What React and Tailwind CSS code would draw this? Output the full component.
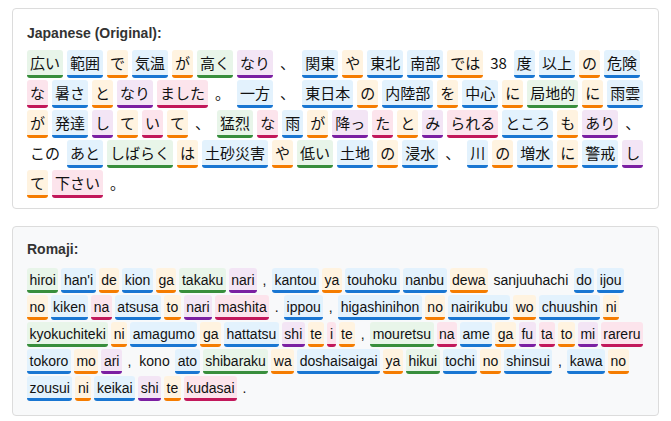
const C = {
  g: "bg-[#e8f5e9] border-[#388e3c]",
  b: "bg-[#e3f2fd] border-[#1976d2]",
  o: "bg-[#fff3e0] border-[#f57c00]",
  p: "bg-[#f3e5f5] border-[#7b1fa2]",
  k: "bg-[#fce4ec] border-[#c2185b]",
  x: "border-transparent",
};
const codes = "g b o b o g p x b o b b o x b b o b k b o p k x b x b o b o b o g o b o b p o k o x g k b o p k o p k b o p x x b g o b o g b o b x b o b o b p o k x".split(" ");
const jp = "広い 範囲 で 気温 が 高く なり 、 関東 や 東北 南部 では 38 度 以上 の 危険 な 暑さ と なり ました 。 一方 、 東日本 の 内陸部 を 中心 に 局地的 に 雨雲 が 発達 し て い て 、 猛烈 な 雨 が 降っ た と み られる ところ も あり 、 この あと しばらく は 土砂災害 や 低い 土地 の 浸水 、 川 の 増水 に 警戒 し て 下さい 。".split(" ");
const ro = "hiroi han'i de kion ga takaku nari , kantou ya touhoku nanbu dewa sanjuuhachi do ijou no kiken na atsusa to nari mashita . ippou , higashinihon no nairikubu wo chuushin ni kyokuchiteki ni amagumo ga hattatsu shi te i te , mouretsu na ame ga fu ta to mi rareru tokoro mo ari , kono ato shibaraku wa doshaisaigai ya hikui tochi no shinsui , kawa no zousui ni keikai shi te kudasai .".split(" ");

export default function App() {
  return (
    <div className="w-[671px] h-[421px] bg-white px-[12px] pt-[8px] flex flex-col gap-[17px]" style={{ fontFamily: '"Liberation Sans", Arial, sans-serif' }}>
      <div className="bg-white border border-[#dcdcdc] rounded-[4px] px-[14px] pt-[14px] pb-[10px]">
        <div className="text-[14px] font-bold text-[#333] mb-[6px]">Japanese (Original):</div>
        <div className="flex flex-wrap gap-x-[4px] gap-y-[2px]" style={{ fontFamily: '"Noto Sans CJK JP", sans-serif' }}>
          {jp.map((t, i) => (
            <span key={i} className={`text-[15px] leading-[22px] text-[#111] px-[3px] pt-[2px] pb-[1px] rounded-[3px] border-b-[3px] ${C[codes[i]]}`}>{t}</span>
          ))}
        </div>
      </div>
      <div className="bg-[#f8f9fa] border border-[#dcdcdc] rounded-[4px] px-[14px] pt-[12px] pb-[14px]">
        <div className="text-[14px] font-bold text-[#333] mb-[8px]">Romaji:</div>
        <div className="flex flex-wrap gap-x-[3px] gap-y-[2px]">
          {ro.map((t, i) => (
            <span key={i} className={`text-[14px] leading-[18px] text-[#111] px-[2.5px] pt-[3px] pb-[1px] rounded-[3px] border-b-[3px] ${C[codes[i]]}`}>{t}</span>
          ))}
        </div>
      </div>
    </div>
  );
}
